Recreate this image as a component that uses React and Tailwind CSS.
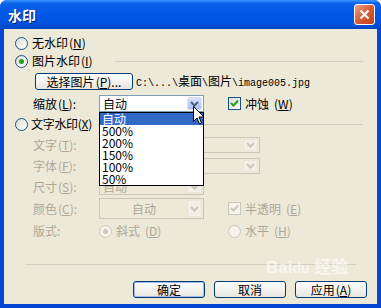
import React from 'react';

const cjk = { fontFamily: '"Noto Sans CJK SC", "Noto Sans", sans-serif' };

function Radio({ checked, disabled }) {
    return (
        <span className={`relative inline-flex items-center justify-center w-[13px] h-[13px] rounded-full border shrink-0 ${disabled ? 'border-[#CAC8BB] bg-[#F5F4EA]' : 'border-[#1C5180] bg-gradient-to-br from-[#DCDBD2] to-white'}`}>
            {checked && <span className={`w-[5px] h-[5px] rounded-full ${disabled ? 'bg-[#CAC8BB]' : 'bg-[#21A121]'}`} />}
        </span>
    );
}

function Check({ disabled }) {
    return (
        <span className={`inline-flex items-center justify-center w-[13px] h-[13px] border shrink-0 ${disabled ? 'border-[#CAC8BB] bg-[#F5F4EA]' : 'border-[#1C5180] bg-gradient-to-br from-[#DCDBD2] to-white'}`}>
            <svg width="9" height="9" viewBox="0 0 9 9">
                <path d="M1 4 L3.5 6.5 L8 1.5" fill="none" stroke={disabled ? '#CAC8BB' : '#21A121'} strokeWidth="2" />
            </svg>
        </span>
    );
}

function Arrow({ disabled, hover }) {
    return (
        <span className={`flex items-center justify-center w-[15px] h-full rounded-[2px] border ${disabled ? 'border-[#E8E6DC] bg-[#F1EFE6]' : hover ? 'border-[#D6E1FC] bg-gradient-to-b from-[#D8E3FD] to-[#A9C0F5]' : 'border-[#C0D2F8] bg-gradient-to-b from-[#CCD9FA] to-[#B4C8F5]'}`}>
            <svg width="9" height="6" viewBox="0 0 9 6">
                <path d="M1 1 L4.5 4.5 L8 1" fill="none" stroke={disabled ? '#C9C7BA' : '#4D6185'} strokeWidth="2" />
            </svg>
        </span>
    );
}

function Combo({ w, h = 'h-[17px]', text, disabled, hover, center }) {
    return (
        <div className={`${w} ${h} flex items-stretch border p-[1px] shrink-0 ${disabled ? 'border-[#C9C7BA] bg-[#ECE9D8]' : 'border-[#7F9DB9] bg-white'}`}>
            <div className={`flex-1 flex items-center text-[12px] leading-none px-[2px] ${center ? 'justify-center' : ''} ${disabled ? 'text-[#ACA899]' : 'text-black'}`} style={cjk}>{text}</div>
            <Arrow disabled={disabled} hover={hover} />
        </div>
    );
}

function Btn({ children, def, w = 'w-[72px]' }) {
    return (
        <div className={`${w} h-[17px] shrink-0 whitespace-nowrap flex items-center justify-center rounded-[3px] border border-[#003C74] bg-gradient-to-b from-white to-[#E6E5DE] text-[12px] leading-none text-black ${def ? 'shadow-[inset_0_0_0_1px_#A3BDF1]' : ''}`} style={cjk}>
            {children}
        </div>
    );
}

function Key({ k }) {
    return <span className="ml-[1px]">(<u>{k}</u>)</span>;
}

export default function App() {
    const items = ['自动', '500%', '200%', '150%', '100%', '50%'];
    const gray = 'text-[#ACA899]';
    return (
        <div className="w-[381px] h-[308px] flex flex-col bg-[#0845D4] rounded-t-[7px] overflow-hidden select-none" style={cjk}>
            {/* title bar */}
            <div className="h-[29px] flex items-center justify-between pl-[8px] pr-[6px] bg-[linear-gradient(to_bottom,#3D95FF_0%,#0A62EA_12%,#0058E6_45%,#0054E0_80%,#0046C2_100%)]">
                <span className="text-white text-[14px] font-bold leading-none [text-shadow:1px_1px_0_#0A1E7A]">水印</span>
                <span className="w-[21px] h-[21px] flex items-center justify-center rounded-[3px] border border-white bg-[linear-gradient(135deg,#EDA288_0%,#D85A36_50%,#C2401C_100%)]">
                    <svg width="11" height="11" viewBox="0 0 11 11">
                        <path d="M1.5 1.5 L9.5 9.5 M9.5 1.5 L1.5 9.5" stroke="white" strokeWidth="2.2" />
                    </svg>
                </span>
            </div>

            {/* body */}
            <div className="relative flex-1 mx-[4px] mb-[4px] bg-[#ECE9D8] text-[12px] leading-none text-black flex flex-col whitespace-nowrap">
                <div className="mt-[7px] h-[14px] flex items-center gap-[4px] pl-[11px]">
                    <Radio /> <span>无水印<Key k="N" /></span>
                </div>
                <div className="mt-[4px] h-[14px] flex items-center gap-[4px] pl-[11px]">
                    <Radio checked /> <span>图片水印<Key k="I" /></span>
                    <div className="flex-1 h-[1px] bg-[#D0CEBF] ml-[18px] mr-[14px]" />
                </div>
                <div className="mt-[5px] h-[17px] flex items-center pl-[31px] gap-[3px]">
                    <Btn w="w-[98px]">选择图片<Key k="P" />...</Btn>
                    <span className="text-[10px] leading-none" style={{ fontFamily: '"Liberation Mono", "Noto Sans CJK SC", monospace' }}>
                        C:\...\<span className="text-[12px]" style={cjk}>桌面</span>\<span className="text-[12px]" style={cjk}>图片</span>\image005.jpg
                    </span>
                </div>
                <div className="mt-[5px] h-[17px] flex items-center">
                    <span className="w-[95px] pl-[29px] shrink-0">缩放<Key k="L" />:</span>
                    <Combo w="w-[105px]" text="自动" hover />
                    <span className="ml-[24px] flex items-center gap-[4px]"><Check /> 冲蚀<Key k="W" /></span>
                </div>
                <div className="mt-[5px] h-[14px] flex items-center gap-[3px] pl-[11px]">
                    <Radio /> <span className="tracking-[-0.3px]">文字水印(<u>X</u>)</span>
                    <div className="flex-1 h-[1px] bg-[#D0CEBF] ml-[10px] mr-[14px]" />
                </div>
                <div className={`mt-[6px] h-[16px] flex items-center ${gray}`}>
                    <span className="w-[95px] pl-[29px] shrink-0">文字<Key k="T" />:</span>
                    <Combo w="w-[161px]" h="h-[16px]" text="" disabled />
                </div>
                <div className={`mt-[5px] h-[16px] flex items-center ${gray}`}>
                    <span className="w-[95px] pl-[29px] shrink-0">字体<Key k="F" />:</span>
                    <Combo w="w-[161px]" h="h-[16px]" text="" disabled />
                </div>
                <div className={`mt-[5px] h-[16px] flex items-center ${gray}`}>
                    <span className="w-[95px] pl-[29px] shrink-0">尺寸<Key k="S" />:</span>
                    <Combo w="w-[105px]" h="h-[16px]" text="自动" disabled />
                </div>
                <div className={`mt-[3px] h-[21px] flex items-center ${gray}`}>
                    <span className="w-[95px] pl-[29px] shrink-0">颜色<Key k="C" />:</span>
                    <Combo w="w-[105px]" h="h-[21px]" text="自动" disabled center />
                    <span className="ml-[24px] flex items-center gap-[4px]"><Check disabled /> 半透明<Key k="E" /></span>
                </div>
                <div className={`mt-[5px] h-[14px] flex items-center ${gray}`}>
                    <span className="w-[95px] pl-[29px] shrink-0">版式:</span>
                    <span className="w-[129px] flex items-center gap-[4px]"><Radio checked disabled /> 斜式<Key k="D" /></span>
                    <span className="flex items-center gap-[4px]"><Radio disabled /> 水平<Key k="H" /></span>
                </div>
                <div className="mt-[26px] h-[1px] mx-[21px] bg-[#D0CEBF]" />
                <div className="mt-[16px] flex justify-end gap-[9px] pr-[10px]">
                    <Btn def>确定</Btn>
                    <Btn>取消</Btn>
                    <Btn>应用<Key k="A" /></Btn>
                </div>

                {/* open dropdown list */}
                <div className="absolute left-[95px] top-[83px] w-[105px] border border-black bg-white">
                    {items.map((it, i) => (
                        <div key={it} className={`h-[12px] flex items-center pl-[2px] text-[12px] leading-none ${i === 0 ? 'bg-[#316AC5] text-white' : 'text-black'}`}>{it}</div>
                    ))}
                </div>

                {/* mouse cursor */}
                <svg className="absolute left-[189px] top-[77px]" width="12" height="19" viewBox="0 0 12 19">
                    <path d="M0.5 0.5 L0.5 15.5 L4 12 L6.5 18 L8.5 17 L6 11 L11 11 Z" fill="white" stroke="black" strokeWidth="1" />
                </svg>

                {/* watermark */}
                <div className="absolute left-[262px] top-[230px] flex flex-col items-center text-white/60 pointer-events-none">
                    <span className="text-[17px] font-bold leading-none" style={{ fontFamily: '"Liberation Sans", "Noto Sans CJK SC", sans-serif' }}>Bai<span className="text-[14px]">du</span> 经验</span>
                </div>
            </div>
        </div>
    );
}
